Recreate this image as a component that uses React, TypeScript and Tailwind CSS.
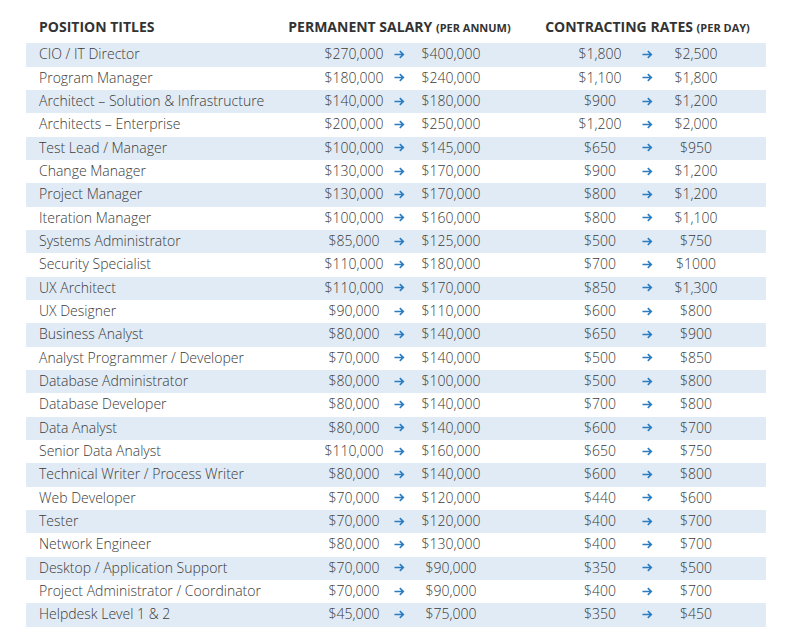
import React from "react";

const rows: [string, string, string, string, string][] = [
  ["CIO / IT Director", "$270,000", "$400,000", "$1,800", "$2,500"],
  ["Program Manager", "$180,000", "$240,000", "$1,100", "$1,800"],
  ["Architect – Solution & Infrastructure", "$140,000", "$180,000", "$900", "$1,200"],
  ["Architects – Enterprise", "$200,000", "$250,000", "$1,200", "$2,000"],
  ["Test Lead / Manager", "$100,000", "$145,000", "$650", "$950"],
  ["Change Manager", "$130,000", "$170,000", "$900", "$1,200"],
  ["Project Manager", "$130,000", "$170,000", "$800", "$1,200"],
  ["Iteration Manager", "$100,000", "$160,000", "$800", "$1,100"],
  ["Systems Administrator", "$85,000", "$125,000", "$500", "$750"],
  ["Security Specialist", "$110,000", "$180,000", "$700", "$1000"],
  ["UX Architect", "$110,000", "$170,000", "$850", "$1,300"],
  ["UX Designer", "$90,000", "$110,000", "$600", "$800"],
  ["Business Analyst", "$80,000", "$140,000", "$650", "$900"],
  ["Analyst Programmer / Developer", "$70,000", "$140,000", "$500", "$850"],
  ["Database Administrator", "$80,000", "$100,000", "$500", "$800"],
  ["Database Developer", "$80,000", "$140,000", "$700", "$800"],
  ["Data Analyst", "$80,000", "$140,000", "$600", "$700"],
  ["Senior Data Analyst", "$110,000", "$160,000", "$650", "$750"],
  ["Technical Writer / Process Writer", "$80,000", "$140,000", "$600", "$800"],
  ["Web Developer", "$70,000", "$120,000", "$440", "$600"],
  ["Tester", "$70,000", "$120,000", "$400", "$700"],
  ["Network Engineer", "$80,000", "$130,000", "$400", "$700"],
  ["Desktop / Application Support", "$70,000", "$90,000", "$350", "$500"],
  ["Project Administrator / Coordinator", "$70,000", "$90,000", "$400", "$700"],
  ["Helpdesk Level 1 & 2", "$45,000", "$75,000", "$350", "$450"],
];

function Arrow() {
  return (
    <svg width="11" height="9" viewBox="0 0 11 9" className="mx-auto block">
      <path d="M0.5 4.5H9.2M5.8 1.2L9.3 4.5L5.8 7.8" fill="none" stroke="#2a7cc1" strokeWidth="1.6" />
    </svg>
  );
}

export default function App() {
  return (
    <div
      className="w-[801px] h-[636px] bg-white px-[26px] text-[#3a3a3a]"
      style={{ fontFamily: '"Open Sans", sans-serif' }}
    >
      <div className="w-[740px]">
        <div className="grid grid-cols-[236px_275px_221px_8px] h-[43.33px] items-center pt-[10px] font-bold text-[#333333] text-[14px] leading-none">
          <div className="pl-[13px]">POSITION TITLES</div>
          <div className="text-center">
            PERMANENT SALARY <span className="text-[11px]">(PER ANNUM)</span>
          </div>
          <div className="text-center">
            CONTRACTING RATES <span className="text-[11px]">(PER DAY)</span>
          </div>
          <div />
        </div>
        {rows.map((r, i) => (
          <div
            key={i}
            className={`grid grid-cols-[294px_68px_22px_82px_68px_80px_14px_84px_28px] h-[23.33px] items-center text-[14px] font-light leading-none pb-[1px] ${
              i % 2 === 0 ? "bg-[#e1ebf5]" : "bg-white"
            }`}
          >
            <div className="pl-[13px] whitespace-nowrap">{r[0]}</div>
            <div className="text-center whitespace-nowrap">{r[1]}</div>
            <Arrow />
            <div className="text-center whitespace-nowrap">{r[2]}</div>
            <div />
            <div className="text-center whitespace-nowrap">{r[3]}</div>
            <Arrow />
            <div className="text-center whitespace-nowrap">{r[4]}</div>
            <div />
          </div>
        ))}
      </div>
    </div>
  );
}
